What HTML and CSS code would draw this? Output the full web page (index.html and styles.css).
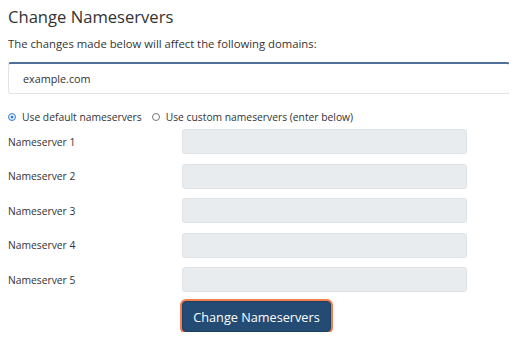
FILE: index.html
```html
<!DOCTYPE html>
<html lang="en">
  <head>
    <meta charset="UTF-8" />
    <title>Change Nameservers</title>
    <link rel="stylesheet" href="styles.css">
  </head>
  <body>
    <div class="panel">
      <h3 class="title">Change Nameservers</h3>
      <p class="intro">The changes made below will affect the following domains:</p>

      <!-- 域名列表 -->
      <div class="domain-box">example.com</div>

      <!-- 单选 -->
      <div class="radio-row">
        <label class="radio"><span class="dot checked"></span>Use default nameservers</label>
        <label class="radio"><span class="dot"></span>Use custom nameservers (enter below)</label>
      </div>

      <div class="ns-list">
        <div class="ns-row"><span class="ns-label">Nameserver 1</span><input class="ns-input" disabled /></div>
        <div class="ns-row"><span class="ns-label">Nameserver 2</span><input class="ns-input" disabled /></div>
        <div class="ns-row"><span class="ns-label">Nameserver 3</span><input class="ns-input" disabled /></div>
        <div class="ns-row"><span class="ns-label">Nameserver 4</span><input class="ns-input" disabled /></div>
        <div class="ns-row"><span class="ns-label">Nameserver 5</span><input class="ns-input" disabled /></div>
      </div>

      <div class="actions">
        <button class="btn">Change Nameservers</button>
      </div>
    </div>
  </body>
</html>
```

FILE: styles.css
```css
* {
  margin: 0;
  padding: 0;
  box-sizing: border-box;
}

body {
  margin: 8px;
  font-family: "Open Sans", "Noto Sans", sans-serif;
  color: #333;
  background: #fff;
}

.title {
  font-size: 16.6px;
  line-height: 18px;
  font-weight: 400;
  color: #333;
}

.intro {
  margin-top: 10px;
  font-size: 11.3px;
  line-height: 16px;
}

.domain-box {
  margin-top: 10px;
  width: 502px;
  height: 32px;
  padding: 0 14px;
  border: 1px solid #e3e3e3;
  border-top: 2px solid #4d6f98;
  border-radius: 3px;
  font-size: 10.8px;
  line-height: 29px;
}

.radio-row {
  display: flex;
  gap: 10px;
  margin-top: 15px;
  font-size: 10.3px;
  line-height: 16px;
}

.radio {
  display: flex;
  align-items: center;
  gap: 6px;
}

.dot {
  width: 8px;
  height: 8px;
  border: 1px solid #777;
  border-radius: 50%;
}

.dot.checked {
  border: 1px solid #2f7fd6;
  background: #fff;
  box-shadow: inset 0 0 0 1.5px #fff, inset 0 0 0 4px #2f7fd6;
}

.ns-list {
  display: flex;
  flex-direction: column;
  gap: 9.5px;
  margin-top: 4px;
}

.ns-row {
  display: flex;
  align-items: center;
  font-size: 10.3px;
}

.ns-label {
  width: 174px;
}

.ns-input {
  width: 285px;
  height: 25px;
  border: 1px solid #dfe2e6;
  border-radius: 3px;
  background: #e9ecef;
}

.actions {
  margin-top: 9px;
  padding-left: 174px;
}

.btn {
  width: 149px;
  height: 31px;
  border: 1px solid #1c3f63;
  border-radius: 4px;
  background: #234b73;
  color: #fff;
  font-family: "Open Sans", "Noto Sans", sans-serif;
  font-size: 12.7px;
  box-shadow: 0 0 0 2px #f2804f;
}
```
